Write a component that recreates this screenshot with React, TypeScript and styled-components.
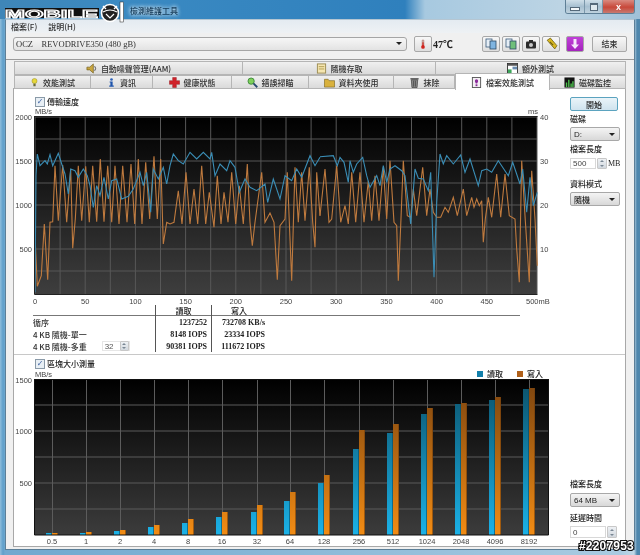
import React from "react";
import styled, { createGlobalStyle } from "styled-components";

const CJK = `"Noto Sans CJK TC", "Liberation Sans", sans-serif`;
const SERIF = `"Liberation Serif", "Noto Sans CJK TC", serif`;

const GlobalStyle = createGlobalStyle`
  html, body {
    margin: 0;
    width: 640px;
    height: 555px;
    overflow: hidden;
    background: #6ea6cc;
  }
`;

const Frame = styled.div`
  position: relative;
  width: 640px;
  height: 555px;
  box-sizing: border-box;
  padding: 0 5px 5px;
  display: flex;
  flex-direction: column;
  font-family: ${CJK};
  font-size: 8px;
  font-weight: 500;
  color: #1e1e1e;
  background: linear-gradient(90deg, #8fbddb 0, #5f9fca 3px, #6fa8cf 5px, #a9cbe1 620px, #c2d8e6 634px, #4f87ad 637px);
  filter: blur(0.45px);
`;

const TitleBar = styled.div`
  height: 19px;
  margin: 0 -5px;
  display: flex;
  justify-content: space-between;
  align-items: flex-start;
  background: linear-gradient(90deg, #3f86b8 0, #3b8ac2 120px, #2f80bd 405px, #a7c9e0 425px, #bcd4e4 560px, #9fc1d8 640px);
`;

const TitleText = styled.div`
  margin: 5px 0 0 130px;
  font-size: 8px;
  line-height: 11px;
  color: #143a58;
  text-shadow: 0 0 4px #d8e8f2, 0 0 4px #d8e8f2;
`;

const WindowControls = styled.div`
  display: flex;
  height: 13px;
  margin-right: 5px;
  border: 1px solid #5e7f96;
  border-top: 0;
  border-radius: 0 0 3px 3px;
  overflow: hidden;
`;

const ControlButton = styled.div<{ $w: number; $close?: boolean }>`
  width: ${(p) => p.$w}px;
  display: flex;
  align-items: center;
  justify-content: center;
  color: #fff;
  font: bold 9px "Liberation Sans", sans-serif;
  background: ${(p) =>
    p.$close
      ? "linear-gradient(#d98a80, #c8483a 55%, #c77a70)"
      : "linear-gradient(#cfdfe9, #a7c0d1 50%, #bfd2de)"};
  & + & {
    border-left: 1px solid #7a97aa;
  }
`;

const MinGlyph = styled.span`
  width: 8px;
  height: 2px;
  margin-top: 5px;
  background: #f4f8fa;
  border: 1px solid #55697a;
`;

const MaxGlyph = styled.span`
  width: 6px;
  height: 5px;
  border: 1px solid #55697a;
  border-top-width: 2px;
  background: #dfe9ef;
`;

const Client = styled.div`
  flex: 1;
  min-height: 0;
  display: flex;
  flex-direction: column;
  background: #f0f0f0;
  border: 1px solid #5c7f98;
  border-top-color: #b5c6d2;
  box-sizing: border-box;
`;

const MenuBar = styled.div`
  height: 13px;
  display: flex;
  gap: 11px;
  align-items: center;
  padding-left: 5px;
  background: linear-gradient(#e4ebf1, #eef1f4);
  color: #333;
`;

const Toolbar = styled.div`
  height: 27px;
  box-sizing: border-box;
  display: flex;
  align-items: center;
  padding: 0 7px 5px 7px;
  border-bottom: 1px solid #9a9a9a;
`;

const DriveCombo = styled.div`
  width: 394px;
  height: 14px;
  box-sizing: border-box;
  border: 1px solid #a5a5a5;
  border-radius: 3px;
  display: flex;
  align-items: center;
  justify-content: space-between;
  padding: 0 4px 0 2px;
  font: 8.5px ${SERIF};
  white-space: pre;
  color: #333;
  background: linear-gradient(#f6f6f6, #e3e3e3);
`;

const Arrow = styled.span`
  width: 0;
  height: 0;
  border-left: 3px solid transparent;
  border-right: 3px solid transparent;
  border-top: 3px solid #222;
`;

const ToolButton = styled.div<{ $ml?: number; $w?: number; $purple?: boolean }>`
  width: ${(p) => p.$w ?? 18}px;
  height: 16px;
  box-sizing: border-box;
  margin-left: ${(p) => p.$ml ?? 2}px;
  display: flex;
  align-items: center;
  justify-content: center;
  border: 1px solid #a8a8a8;
  border-radius: 2px;
  background: ${(p) => (p.$purple ? "linear-gradient(#c040d8, #a424bc)" : "linear-gradient(#f8f8f8, #dedede)")};
  color: #333;
`;

const Temperature = styled.span`
  font: bold 10px ${SERIF};
  margin-left: 1px;
  width: 29px;
  color: #222;
`;

const TabArea = styled.div`
  margin: 1px 8px 0;
  position: relative;
  z-index: 1;
`;

const TabRow = styled.div`
  display: flex;
  height: 14px;
`;

const Tab = styled.div<{ $w: number; $active?: boolean }>`
  width: ${(p) => p.$w}px;
  box-sizing: border-box;
  display: flex;
  align-items: center;
  justify-content: center;
  gap: 4px;
  border: 1px solid #b5b5b5;
  border-left-width: ${(p) => (p.$active ? 1 : 0)}px;
  white-space: nowrap;
  color: #2e2e2e;
  background: ${(p) => (p.$active ? "#fff" : "linear-gradient(#f0f0f0, #dadada)")};
  ${(p) =>
    p.$active
      ? "height: 17px; margin-top: -2px; border-bottom: 0; position: relative; z-index: 2;"
      : ""}
  &:first-child {
    border-left-width: 1px;
  }
`;

const Panel = styled.div`
  flex: 1;
  min-height: 0;
  margin: -1px 8px 2px 7px;
  background: #fff;
  border: 1px solid #a8a8a8;
  display: flex;
  flex-direction: column;
`;

const Section = styled.div<{ $h: number }>`
  height: ${(p) => p.$h}px;
  display: grid;
  grid-template-columns: 556px 1fr;
`;

const Divider = styled.div`
  height: 1px;
  background: #c8c8c8;
`;

const MainColumn = styled.div<{ $pt: number }>`
  padding-top: ${(p) => p.$pt}px;
  display: flex;
  flex-direction: column;
`;

const CheckRow = styled.label`
  height: 11px;
  display: flex;
  align-items: center;
  gap: 2px;
  padding-left: 21px;
  color: #222;
`;

const CheckBox = styled.span`
  width: 8px;
  height: 8px;
  border: 1px solid #8a9aa8;
  background: #e8eff5;
  color: #3a5fa0;
  font: bold 8px/8px "DejaVu Sans", sans-serif;
  text-align: center;
`;

const ChartSvg = styled.svg`
  display: block;
`;

const ResultTable = styled.div`
  margin-left: 19px;
  width: 487px;
`;

const ResultRow = styled.div<{ $head?: boolean }>`
  display: grid;
  grid-template-columns: 122px 56px 55px;
  height: ${(p) => (p.$head ? 11 : 12)}px;
  ${(p) => (p.$head ? "border-bottom: 1px solid #777; box-sizing: border-box;" : "")}
`;

const RowLabel = styled.div`
  display: flex;
  align-items: center;
  color: #333;
  white-space: pre;
  font-size: 8px;
`;

const ValueCell = styled.div<{ $head?: boolean; $second?: boolean }>`
  display: flex;
  align-items: center;
  justify-content: ${(p) => (p.$head ? "center" : "flex-end")};
  padding-right: ${(p) => (p.$head ? 0 : p.$second ? 1 : 4)}px;
  border-left: 1px solid #555;
  font: ${(p) => (p.$head ? `500 8px ${CJK}` : `bold 8px ${SERIF}`)};
  color: #222;
  white-space: nowrap;
`;

const MiniSpin = styled.div`
  width: 28px;
  height: 10px;
  margin-left: 15px;
  display: flex;
  align-items: center;
  justify-content: space-between;
  font: 8px "Liberation Sans", sans-serif;
  color: #555;
  padding-left: 2px;
  box-sizing: border-box;
  border: 1px solid #e6e6e6;
`;

const SpinStack = styled.div<{ $w?: number; $h?: number }>`
  width: ${(p) => p.$w ?? 9}px;
  height: ${(p) => p.$h ?? 10}px;
  box-sizing: border-box;
  display: flex;
  flex-direction: column;
  justify-content: space-around;
  align-items: center;
  background: linear-gradient(#eef1f4, #d2d8de);
  border: 1px solid #c8c8c8;
  border-radius: 1px;
`;

const SpinArrow = styled.span<{ $down?: boolean }>`
  width: 0;
  height: 0;
  border-left: 2px solid transparent;
  border-right: 2px solid transparent;
  ${(p) => (p.$down ? "border-top: 2px solid #7a8794;" : "border-bottom: 2px solid #7a8794;")}
`;

const SideColumn = styled.div<{ $end?: boolean }>`
  display: flex;
  flex-direction: column;
  align-items: flex-start;
  ${(p) => (p.$end ? "justify-content: flex-end; padding-bottom: 8px;" : "padding-top: 8px;")}
  color: #222;
  padding-right: 6px;
`;

const StartButton = styled.div`
  width: 48px;
  height: 14px;
  box-sizing: border-box;
  display: flex;
  align-items: center;
  justify-content: center;
  border: 1px solid #5ba3bf;
  border-radius: 2px;
  background: linear-gradient(#eaf4f9, #cfe3ee);
`;

const FieldLabel = styled.div<{ $mt: number }>`
  margin-top: ${(p) => p.$mt}px;
  line-height: 10px;
`;

const Select = styled.div<{ $mt?: number }>`
  width: 50px;
  height: 14px;
  margin-top: ${(p) => p.$mt ?? 2}px;
  box-sizing: border-box;
  display: flex;
  align-items: center;
  justify-content: space-between;
  padding: 0 4px 0 3px;
  border: 1px solid #a8a8a8;
  border-radius: 2px;
  font-size: 8px;
  font-family: "Liberation Sans", ${CJK};
  background: linear-gradient(#f4f4f4, #d8d8d8);
`;

const InputRow = styled.div<{ $mt: number }>`
  margin-top: ${(p) => p.$mt}px;
  display: flex;
  align-items: center;
  gap: 1px;
  font: 8px "Liberation Serif", serif;
`;

const NumberBox = styled.div<{ $w: number; $h: number }>`
  width: ${(p) => p.$w}px;
  height: ${(p) => p.$h}px;
  box-sizing: border-box;
  display: flex;
  align-items: center;
  padding-left: 2px;
  border: 1px solid #d8d8d8;
  font: 8px "Liberation Sans", sans-serif;
  color: #444;
`;

const LogoMark = styled.svg`
  position: absolute;
  left: 3px;
  top: 1px;
`;

const ImageId = styled.div`
  position: absolute;
  right: 6px;
  bottom: 2px;
  font: bold 12px "Liberation Sans", sans-serif;
  letter-spacing: 0.2px;
  color: #fff;
  -webkit-text-stroke: 2.2px #111;
  paint-order: stroke fill;
`;

// reference positions were read off 3x crops, so the traces stay in crop coordinates
type Pt = [number, number];
const crop = (pts: Pt[], ox: number) => pts.map(([x, y]) => `${(ox + x / 3).toFixed(1)},${(110 + y / 3).toFixed(1)}`).join(" ");

const blueA: Pt[] = [[105,550],[108,200],[112,135],[120,170],[135,155],[142,165],[150,137],[158,170],[175,133],[185,165],[195,195],[205,255],[212,180],[225,185],[235,205],[250,180],[262,200],[270,230],[280,295],[290,230],[300,260],[312,205],[325,270],[335,215],[350,210],[365,270],[385,262],[400,240],[420,190],[430,230],[440,190],[452,310],[460,180],[475,210],[490,175],[500,225],[510,170],[520,135],[535,155],[550,165],[570,130],[590,150],[610,130],[630,150],[635,130],[645,200],[660,165],[680,185],[690,155],[705,175],[718,250],[735,210],[750,235],[770,245],[795,225],[803,280],[820,210],[840,270],[855,200],[875,215],[890,180],[905,205],[930,140],[945,170],[960,145]];
const blueB: Pt[] = [[0,143],[40,140],[52,170],[60,145],[72,160],[85,220],[90,155],[100,190],[110,165],[128,145],[140,200],[150,235],[170,200],[180,230],[190,170],[200,220],[210,180],[225,170],[245,185],[255,200],[272,345],[285,180],[295,208],[310,210],[325,245],[332,190],[342,505],[350,280],[360,135],[370,165],[380,140],[400,165],[422,138],[435,190],[450,150],[475,230],[485,185],[500,180],[515,190],[535,155],[565,200],[578,160],[600,225],[608,180],[620,310],[630,205],[640,290],[652,250]];
const orangeA: Pt[] = [[105,380],[112,532],[124,500],[133,345],[143,512],[150,340],[158,338],[165,170],[175,335],[188,168],[200,340],[212,180],[218,418],[226,330],[235,170],[245,335],[257,172],[268,340],[278,170],[290,338],[301,150],[312,338],[323,170],[335,340],[345,170],[357,345],[368,170],[381,340],[393,165],[404,345],[415,150],[426,345],[437,160],[449,330],[462,142],[472,330],[482,150],[490,405],[500,340],[510,345],[522,340],[535,245],[546,345],[558,190],[570,345],[582,240],[593,345],[605,170],[617,345],[628,250],[642,355],[652,200],[663,345],[672,250],[684,340],[695,190],[707,345],[718,230],[730,345],[742,165],[750,340],[757,410],[765,340],[785,190],[795,340],[810,312],[822,340],[832,512],[840,350],[855,330],[862,190],[875,515],[885,175],[895,340],[905,190],[915,335],[928,175],[938,340],[945,415],[950,190],[960,320]];
const orangeB: Pt[] = [[0,320],[15,180],[27,340],[35,330],[50,170],[62,340],[75,290],[85,345],[95,190],[107,340],[120,190],[132,340],[145,215],[155,335],[165,200],[177,335],[190,175],[200,330],[210,155],[222,340],[230,350],[235,515],[242,350],[250,155],[262,320],[272,325],[280,240],[290,320],[308,175],[320,320],[330,240],[340,310],[350,325],[362,325],[375,295],[385,310],[400,265],[412,320],[430,240],[440,320],[455,265],[462,295],[470,270],[478,290],[485,275],[490,400],[496,330],[505,265],[515,325],[530,195],[542,325],[555,195],[568,320],[585,330],[590,420],[598,520],[605,155],[615,320],[628,520],[635,185],[645,330],[652,470]];

const bars = [
  ["0.5", 52, 534, 534], ["1", 86, 534, 533], ["2", 120, 532, 531], ["4", 154, 528, 526],
  ["8", 188, 524, 520], ["16", 222, 518, 513], ["32", 257, 513, 506], ["64", 290, 502, 493],
  ["128", 324, 484, 476], ["256", 359, 450, 431], ["512", 393, 434, 425], ["1024", 427, 415, 409],
  ["2048", 461, 405, 404], ["4096", 495, 401, 398], ["8192", 529, 390, 389],
] as const;

const labelFont = { fontFamily: "Liberation Sans, sans-serif", fontSize: 7.5, fill: "#444" };

const Speed = () => {
  const vertical = Array.from({ length: 21 }, (_, i) => 35 + i * 25.1);
  const horizontal = [118, 140, 162, 184, 206, 228, 250, 272];
  return (
    <ChartSvg width={540} height={198} viewBox="14 108 540 198">
      <defs>
        <linearGradient id="plot" x1="0" y1="0" x2="0" y2="1">
          <stop offset="0" stopColor="#000" />
          <stop offset="1" stopColor="#3e3e3e" />
        </linearGradient>
      </defs>
      <rect x={35} y={117} width={502} height={178} fill="url(#plot)" />
      {vertical.map((x) => <line key={x} x1={x} x2={x} y1={117} y2={295} stroke="#585858" />)}
      {horizontal.map((y) => <line key={y} x1={35} x2={537} y1={y} y2={y} stroke="#565656" />)}
      <polyline points={crop(orangeA, 0)} fill="none" stroke="#bf7a3e" strokeWidth={1.1} />
      <polyline points={crop(orangeB, 320)} fill="none" stroke="#bf7a3e" strokeWidth={1.1} />
      <polyline points={crop(blueA, 0)} fill="none" stroke="#3a8db5" strokeWidth={1.1} />
      <polyline points={crop(blueB, 320)} fill="none" stroke="#3a8db5" strokeWidth={1.1} />
      <path d="M34.5 117V295.5H537.5M34.5 117.5H537.5" fill="none" stroke="#222" />
      <text x={35} y={115} {...labelFont}>MB/s</text>
      <text x={528} y={115} {...labelFont}>ms</text>
      {[["2000", 121], ["1500", 165], ["1000", 209], ["500", 253]].map(([t, y]) => (
        <text key={t} x={32} y={y} textAnchor="end" {...labelFont}>{t}</text>
      ))}
      {[["40", 121], ["30", 165], ["20", 209], ["10", 253]].map(([t, y]) => (
        <text key={t} x={540} y={y} {...labelFont}>{t}</text>
      ))}
      {[0, 50, 100, 150, 200, 250, 300, 350, 400, 450].map((v) => (
        <text key={v} x={35 + v * 1.004} y={305} textAnchor="middle" {...labelFont}>{v}</text>
      ))}
      <text x={526} y={305} {...labelFont}>500mB</text>
    </ChartSvg>
  );
};

const BlockSize = () => (
  <ChartSvg width={541} height={176} viewBox="14 370 541 176">
    <defs>
      <linearGradient id="plot2" x1="0" y1="0" x2="0" y2="1">
        <stop offset="0" stopColor="#000" />
        <stop offset="1" stopColor="#3c3c3c" />
      </linearGradient>
      <linearGradient id="readBar" gradientUnits="userSpaceOnUse" x1="0" y1="380" x2="0" y2="536">
        <stop offset="0" stopColor="#0b5068" />
        <stop offset="1" stopColor="#1bb2e8" />
      </linearGradient>
      <linearGradient id="writeBar" gradientUnits="userSpaceOnUse" x1="0" y1="380" x2="0" y2="536">
        <stop offset="0" stopColor="#7a430f" />
        <stop offset="1" stopColor="#f28c14" />
      </linearGradient>
    </defs>
    <rect x={34} y={380} width={514} height={156} fill="url(#plot2)" />
    {bars.map((b) => <line key={b[1]} x1={b[1] + 0.5} x2={b[1] + 0.5} y1={380} y2={536} stroke="#5c5c5c" />)}
    {[406, 432, 458, 484, 510].map((y) => <line key={y} x1={34} x2={548} y1={y} y2={y} stroke="#5a5a5a" />)}
    {bars.map(([name, x, read, write]) => (
      <g key={name}>
        <rect x={x - 6} y={read} width={6} height={536 - read} fill="url(#readBar)" />
        <rect x={x - 1} y={read} width={1} height={536 - read} fill="#0a4a60" opacity={0.6} />
        <rect x={x} y={write} width={6} height={536 - write} fill="url(#writeBar)" />
        <rect x={x + 5} y={write} width={1} height={536 - write} fill="#6e3c0c" opacity={0.6} />
      </g>
    ))}
    <path d="M34.5 380V536H548.5V380M34.5 380.5H548.5" fill="none" stroke="#111" />
    <text x={35} y={378} {...labelFont}>MB/s</text>
    <rect x={477} y={372} width={6} height={6} fill="#1380ab" />
    <text x={487} y={378} fontSize={8} fontFamily={CJK} fill="#222">讀取</text>
    <rect x={517} y={372} width={6} height={6} fill="#b0601a" />
    <text x={527} y={378} fontSize={8} fontFamily={CJK} fill="#222">寫入</text>
    {[["1500", 384], ["1000", 435], ["500", 487]].map(([t, y]) => (
      <text key={t} x={32} y={y} textAnchor="end" {...labelFont}>{t}</text>
    ))}
    {bars.map((b) => (
      <text key={b[0]} x={b[1]} y={545} textAnchor="middle" {...labelFont}>{b[0]}</text>
    ))}
  </ChartSvg>
);

const Glyph = ({ children, w = 11, h = 11 }: { children: React.ReactNode; w?: number; h?: number }) => (
  <svg width={w} height={h} viewBox="0 0 12 12">{children}</svg>
);

const SpeakerIcon = () => (
  <Glyph><path d="M1 4.5h3L8 1v10L4 7.5H1z" fill="#c9a640" stroke="#6d5a18" strokeWidth=".7" /><path d="M9.5 3.5q2 2.5 0 5" fill="none" stroke="#444" /></Glyph>
);
const BulbIcon = () => (
  <Glyph w={9} h={13}><circle cx="6" cy="4" r="3.4" fill="#e6d83a" stroke="#8f8420" strokeWidth=".6" /><rect x="4.5" y="7.5" width="3" height="3.5" fill="#6a6a3a" /></Glyph>
);
const InfoIcon = () => (
  <Glyph w={9} h={13}><circle cx="6" cy="2" r="1.8" fill="#2a5fb8" /><path d="M3.5 4.5h4v5.5h1.5v1.5h-6V10h1.5V6H3.5z" fill="#1f55ad" /></Glyph>
);
const CrossIcon = () => (
  <Glyph><path d="M4 .5h4v3.5h3.5v4H8v3.5H4V8H.5V4H4z" fill="#d0232a" stroke="#93171c" strokeWidth=".5" /></Glyph>
);
const LensIcon = () => (
  <Glyph><circle cx="4.5" cy="4.5" r="3.4" fill="#7fd05a" stroke="#3c8a3a" /><path d="M7 7l4.2 4.2" stroke="#26486e" strokeWidth="2" /></Glyph>
);
const NoteIcon = () => (
  <Glyph><rect x="1.5" y="1" width="9" height="10" fill="#f5e6b0" stroke="#9a8a50" /><path d="M3 4h6M3 6.5h6" stroke="#b09a50" /></Glyph>
);
const FolderIcon = () => (
  <Glyph><path d="M.5 2.5h4l1 1.5h6v7h-11z" fill="#d9b13d" stroke="#7c6620" strokeWidth=".7" /></Glyph>
);
const TrashIcon = () => (
  <Glyph><path d="M2.5 3h7l-.7 8.5H3.2z" fill="#8a8a8a" stroke="#333" strokeWidth=".7" /><path d="M1.5 2h9" stroke="#333" strokeWidth="1.2" /><path d="M5 4v6.5M7 4v6.5" stroke="#333" strokeWidth=".7" /></Glyph>
);
const BenchIcon = () => (
  <Glyph><rect x="1.5" y=".5" width="9" height="11" fill="#f4f0f4" stroke="#555" /><path d="M6 2.5a1.8 1.8 0 0 1 1.8 1.8c0 1-.8 1.4-1 2.7H5.2c-.2-1.3-1-1.7-1-2.7A1.8 1.8 0 0 1 6 2.5z" fill="#8a2a9a" /><rect x="5" y="8" width="2" height="2" fill="#8a2a9a" /></Glyph>
);
const WindowIcon = () => (
  <Glyph><rect x=".5" y=".5" width="11" height="11" fill="#fff" stroke="#333" /><rect x="1" y="1" width="10" height="2" fill="#555" /><rect x="1" y="7" width="4" height="4" fill="#3da65a" /><rect x="6" y="4" width="5" height="3" fill="#6a8db0" /></Glyph>
);
const BarsIcon = () => (
  <Glyph><rect x=".5" y=".5" width="11" height="11" fill="#111" /><path d="M2 11V6h1.5v5zM4.5 11V3H6v8zM7 11V7h1.5v4zM9 11V4.500h1.500v6.500z" fill="#4ec24e" /></Glyph>
);
const ThermoIcon = () => (
  <Glyph w={10} h={14}><rect x="5" y="1" width="2" height="7" rx="1" fill="#d8c0b8" stroke="#8a3a30" strokeWidth=".5" /><rect x="5.300" y="4" width="1.400" height="5" fill="#d0231c" /><circle cx="6" cy="9.500" r="2.200" fill="#d0231c" /></Glyph>
);
const CopyIcon = ({ tint }: { tint: string }) => (
  <Glyph w={12} h={12}><rect x="1" y="1" width="6" height="8" fill="#e6eef6" stroke="#3a5a7a" strokeWidth=".8" /><rect x="5" y="3" width="6" height="8" fill={tint} stroke="#2c4a66" strokeWidth=".8" /></Glyph>
);
const CameraIcon = () => (
  <Glyph w={12} h={12}><rect x="1" y="3.500" width="10" height="7" rx="1" fill="#2c2c2c" /><rect x="4" y="2" width="4" height="2" fill="#2c2c2c" /><circle cx="6" cy="7" r="2" fill="#c8c8c8" /></Glyph>
);
const LinkIcon = () => (
  <Glyph w={13} h={13}><path d="M2 3l3-2 6 7-2 3z" fill="#d8b820" stroke="#6a5a10" strokeWidth=".7" /><path d="M4.500 4.500l3 3" stroke="#6a5a10" /></Glyph>
);
const DownIcon = () => (
  <Glyph w={12} h={12}><path d="M6 11L2 6.500h2.500V1h3v5.500H10z" fill="#f5e8fa" /></Glyph>
);

const Spinner = ({ w, h }: { w?: number; h?: number }) => (
  <SpinStack $w={w} $h={h}>
    <SpinArrow />
    <SpinArrow $down />
  </SpinStack>
);

const App = () => (
  <Frame>
    <GlobalStyle />
    <TitleBar>
      <TitleText>檢測維護工具</TitleText>
      <WindowControls>
        <ControlButton $w={18}><MinGlyph /></ControlButton>
        <ControlButton $w={17}><MaxGlyph /></ControlButton>
        <ControlButton $w={31} $close>x</ControlButton>
      </WindowControls>
    </TitleBar>
    <Client>
      <MenuBar>
        <span>檔案(F)</span>
        <span>說明(H)</span>
      </MenuBar>
      <Toolbar>
        <DriveCombo>
          {"OCZ    REVODRIVE350 (480 gB)"}
          <Arrow />
        </DriveCombo>
        <ToolButton $ml={7}><ThermoIcon /></ToolButton>
        <Temperature>47℃</Temperature>
        <ToolButton $ml={20}><CopyIcon tint="#7fb4e0" /></ToolButton>
        <ToolButton><CopyIcon tint="#6fbf7a" /></ToolButton>
        <ToolButton><CameraIcon /></ToolButton>
        <ToolButton><LinkIcon /></ToolButton>
        <ToolButton $ml={6} $purple><DownIcon /></ToolButton>
        <ToolButton $ml={8} $w={35}>結束</ToolButton>
      </Toolbar>
      <TabArea>
        <TabRow>
          <Tab $w={229}><SpeakerIcon />自動噪聲管理(AAM)</Tab>
          <Tab $w={193}><NoteIcon />隨機存取</Tab>
          <Tab $w={190}><WindowIcon />額外測試</Tab>
        </TabRow>
        <TabRow>
          <Tab $w={77}><BulbIcon />效能測試</Tab>
          <Tab $w={62}><InfoIcon />資訊</Tab>
          <Tab $w={79}><CrossIcon />健康狀態</Tab>
          <Tab $w={77}><LensIcon />錯誤掃瞄</Tab>
          <Tab $w={85}><FolderIcon />資料夾使用</Tab>
          <Tab $w={61}><TrashIcon />抹除</Tab>
          <Tab $w={95} $active><BenchIcon />檔案效能測試</Tab>
          <Tab $w={76}><BarsIcon />磁碟監控</Tab>
        </TabRow>
      </TabArea>
      <Panel>
        <Section $h={265}>
          <MainColumn $pt={7}>
            <CheckRow><CheckBox>✓</CheckBox>傳輸速度</CheckRow>
            <Speed />
            <ResultTable>
              <ResultRow $head>
                <RowLabel />
                <ValueCell $head>讀取</ValueCell>
                <ValueCell $head>寫入</ValueCell>
              </ResultRow>
              <ResultRow>
                <RowLabel>循序</RowLabel>
                <ValueCell>1237252</ValueCell>
                <ValueCell $second>732708 KB/s</ValueCell>
              </ResultRow>
              <ResultRow>
                <RowLabel>4 KB 隨機-單一</RowLabel>
                <ValueCell>8148 IOPS</ValueCell>
                <ValueCell $second>23334 IOPS</ValueCell>
              </ResultRow>
              <ResultRow>
                <RowLabel>
                  4 KB 隨機-多重
                  <MiniSpin>32<Spinner /></MiniSpin>
                </RowLabel>
                <ValueCell>90381 IOPS</ValueCell>
                <ValueCell $second>111672 IOPS</ValueCell>
              </ResultRow>
            </ResultTable>
          </MainColumn>
          <SideColumn>
            <StartButton>開始</StartButton>
            <FieldLabel $mt={3}>磁碟</FieldLabel>
            <Select $mt={3}>D:<Arrow /></Select>
            <FieldLabel $mt={3}>檔案長度</FieldLabel>
            <InputRow $mt={4}>
              <NumberBox $w={26} $h={11}>500</NumberBox>
              <Spinner w={10} h={11} />
              MB
            </InputRow>
            <FieldLabel $mt={10}>資料模式</FieldLabel>
            <Select $mt={3}>隨機<Arrow /></Select>
          </SideColumn>
        </Section>
        <Divider />
        <Section $h={191}>
          <MainColumn $pt={3}>
            <CheckRow><CheckBox>✓</CheckBox>區塊大小測量</CheckRow>
            <BlockSize />
          </MainColumn>
          <SideColumn $end>
            <FieldLabel $mt={0}>檔案長度</FieldLabel>
            <Select $mt={4}>64 MB<Arrow /></Select>
            <FieldLabel $mt={6}>延遲時間</FieldLabel>
            <InputRow $mt={3}>
              <NumberBox $w={36} $h={12}>0</NumberBox>
              <Spinner w={10} h={12} />
            </InputRow>
          </SideColumn>
        </Section>
      </Panel>
    </Client>
    <LogoMark width={126} height={24} viewBox="0 0 126 24">
      <rect x="2" y="7" width="94" height="10" fill="#111" />
      <text x="2" y="16.500" textLength="93" lengthAdjust="spacingAndGlyphs" fontFamily="Liberation Sans, sans-serif" fontWeight="bold" fontSize="11.500" fill="#222" stroke="#fff" strokeWidth="1">MOBILE</text>
      <circle cx="107" cy="12" r="8.500" fill="#222" stroke="#fff" strokeWidth="1.600" />
      <path d="M100 11q7-4 14 0M103 13l4 4 4-4" fill="none" stroke="#fff" strokeWidth="1.200" />
      <path d="M100 5l3 3M114 5l-3 3" stroke="#fff" strokeWidth="1.400" />
      <rect x="117" y="1" width="3.500" height="20" fill="#fff" stroke="#222" strokeWidth=".5" />
    </LogoMark>
    <ImageId>#2207953</ImageId>
  </Frame>
);

export default App;
